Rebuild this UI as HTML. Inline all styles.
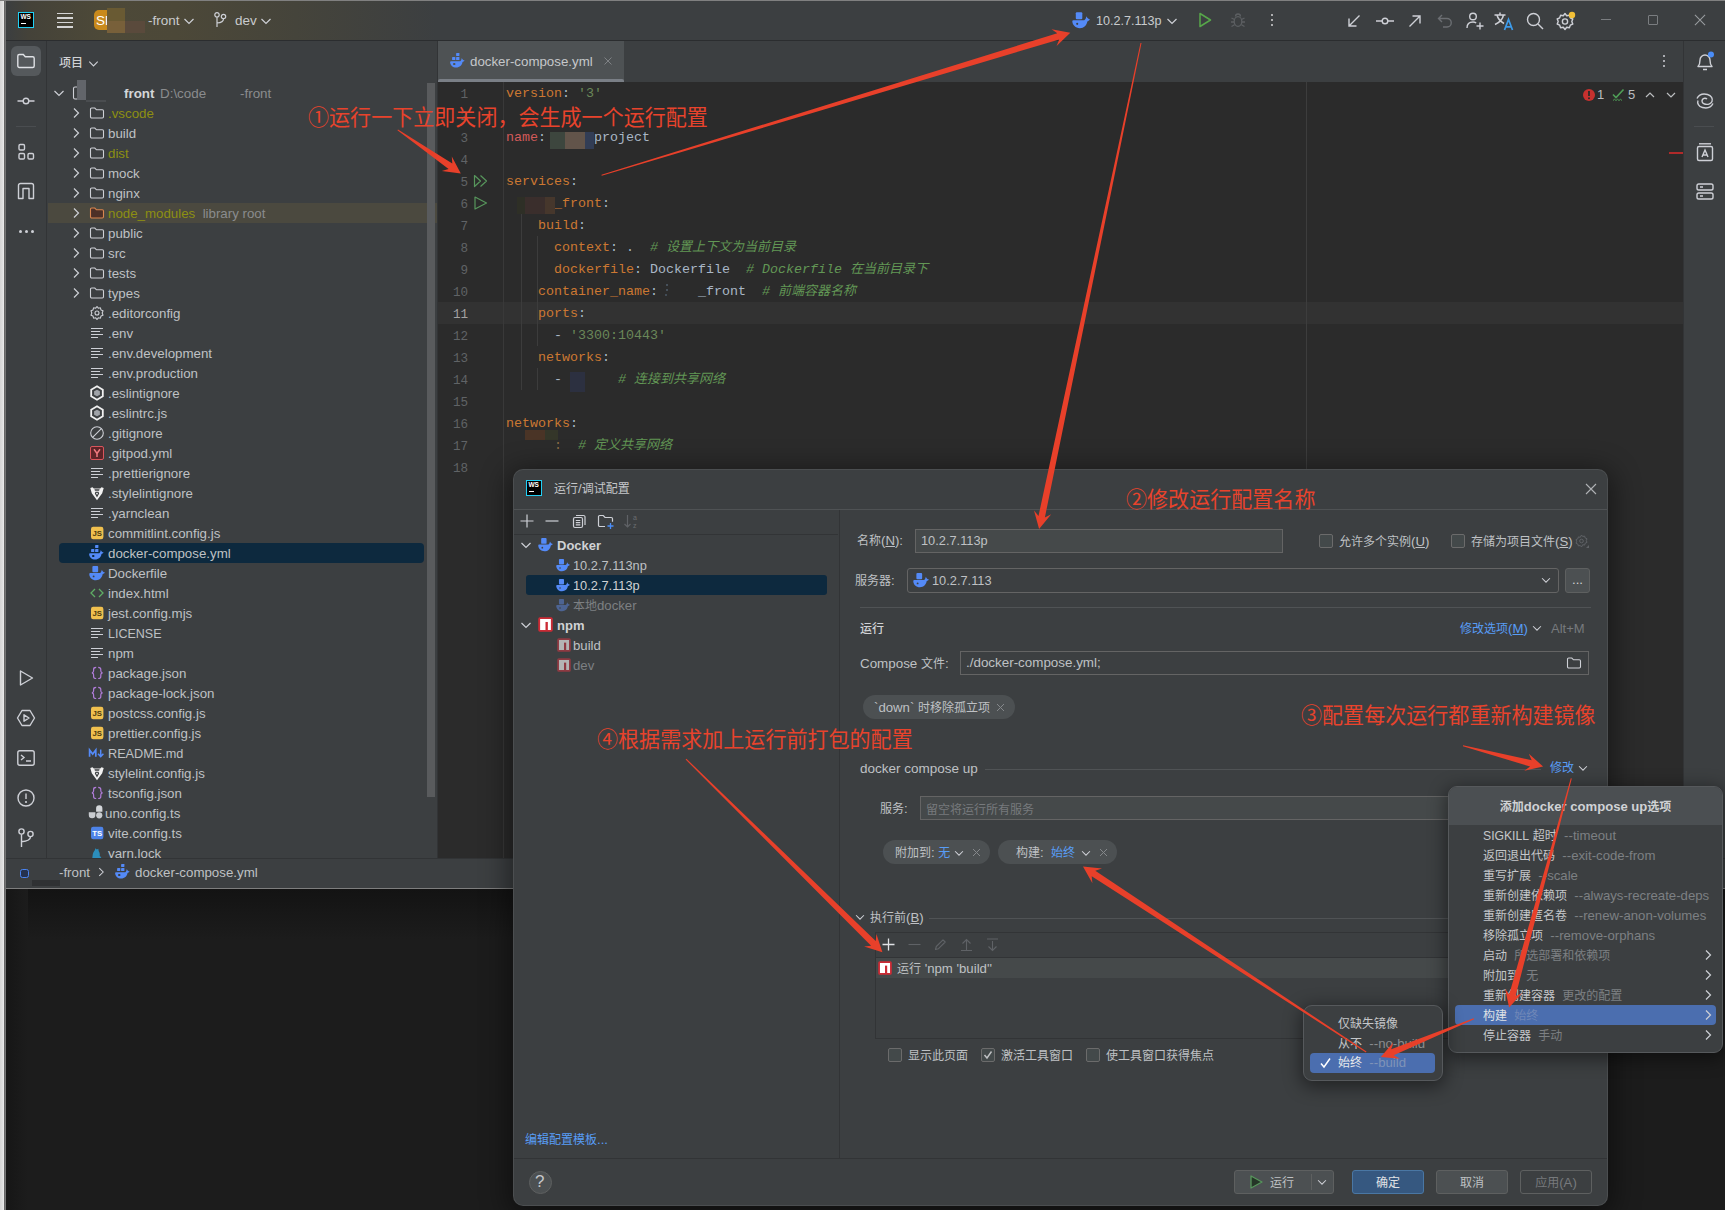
<!DOCTYPE html>
<html lang="zh"><head><meta charset="utf-8"><title>WebStorm</title>
<style>
*{box-sizing:border-box;margin:0;padding:0}
html,body{width:1725px;height:1210px;overflow:hidden;background:#1c1c1c}
body{position:relative;font-family:"Liberation Sans","Noto Sans CJK SC",sans-serif;font-size:13.2px;color:#bfc1c4}
.a{position:absolute}
.i{position:absolute;display:block}
.c{font-size:12px}
.t{position:absolute;white-space:pre;line-height:20px;height:20px}
.g{color:#8a8c8e}
.ol{color:#8d8f12}
.b{font-weight:700}
.bl{color:#589df6}
.code{position:absolute;white-space:pre;font-family:"Liberation Mono","Noto Sans CJK SC",monospace;font-size:13.33px;line-height:22px;height:22px;color:#a9b7c6}
.code .c{font-size:13px}
.k{color:#cc7832}.s{color:#6a8759}.cm{color:#629755;font-style:italic}.nm{color:#d25a5a}
.ln{position:absolute;width:30px;text-align:right;font-family:"Liberation Mono",monospace;font-size:12.6px;line-height:22px;color:#606366}
.red{position:absolute;white-space:pre;color:#e8432c;font-family:"Noto Sans CJK SC","Liberation Sans",sans-serif;line-height:28px}
.inp{position:absolute;background:#45494a;border:1px solid #646464}
.btn{position:absolute;border:1px solid #5e6060;background:#4c5052;border-radius:3px;text-align:center;line-height:24px;height:26px}
.cb{position:absolute;width:14px;height:14px;border:1px solid #6b6b6b;background:#43494a;border-radius:2px}
.chip{position:absolute;background:#4c5052;border-radius:12px;height:24px}
.mos{position:absolute}
</style></head><body>
<div class="a" style="left:0;top:0;width:4px;height:1210px;background:linear-gradient(90deg,#d4d4d4 0,#dedede 60%,#ececec 100%)"></div><div class="a" style="left:4px;top:0;width:2px;height:1210px;background:linear-gradient(90deg,#5e5e5e,#7c7c7c)"></div><div class="a" style="left:6px;top:0;width:1719px;height:889px;background:#3c3f41"></div><div class="a" style="left:6px;top:0;width:1719px;height:40px;background:linear-gradient(90deg,#3b3e40 0,#444239 22px,#4d4938 95px,#4c4838 170px,#45443b 290px,#3c3f41 430px)"></div><div class="a" style="left:0;top:0;width:1725px;height:1px;background:#808080"></div><div class="a" style="left:6px;top:40px;width:1719px;height:1px;background:#2b2d2f"></div><div class="a" style="left:18px;top:12px;width:16px;height:16px;background:#000;border:1.500px solid #21d0f5"></div><div class="a" style="left:20.500px;top:13px;font-size:6.500px;font-weight:700;color:#fff;line-height:8px;letter-spacing:-0.2px">WS</div><div class="a" style="left:21px;top:23px;width:5px;height:1.300px;background:#fff"></div><div class="a" style="left:57px;top:12.5px;width:16px;height:1.800px;background:#d4d4d4"></div><div class="a" style="left:57px;top:17px;width:16px;height:1.800px;background:#d4d4d4"></div><div class="a" style="left:57px;top:21.5px;width:16px;height:1.800px;background:#d4d4d4"></div><div class="a" style="left:57px;top:26px;width:16px;height:1.800px;background:#d4d4d4"></div><div class="a" style="left:94px;top:10px;width:22px;height:20px;border-radius:5px;background:#c98a1c"></div><div class="t" style="left:96px;top:10.500px;color:#fff;font-weight:400;font-size:13.500px">SF</div><div class="mos" style="left:107px;top:8px;width:18px;height:13px;background:#695a33"></div><div class="mos" style="left:107px;top:21px;width:18px;height:12px;background:#78603a"></div><div class="mos" style="left:125px;top:21px;width:20px;height:12px;background:#5a4a3c"></div><div class="t" style="left:148px;top:11px;font-size:13.500px;color:#c9cbcd">-front</div><svg class="i" style="left:181px;top:13px" width="16" height="16" viewBox="0 0 16 16"><path d="M3.5 6L8 10.5 12.5 6" fill="none" stroke="#ced0d6" stroke-width="1.2"/></svg><svg class="i" style="left:212px;top:11px" width="16" height="18" viewBox="0 0 16 18"><circle cx="5" cy="3.800" r="2.200" fill="none" stroke="#ced0d6" stroke-width="1.200"/><circle cx="11.500" cy="5.500" r="2.200" fill="none" stroke="#ced0d6" stroke-width="1.200"/><path d="M5 6v10M11.500 7.700c0 3-2 4-6.500 4.300" fill="none" stroke="#ced0d6" stroke-width="1.200"/></svg><div class="t" style="left:235px;top:11px;font-size:13.500px;color:#c9cbcd">dev</div><svg class="i" style="left:258px;top:13px" width="16" height="16" viewBox="0 0 16 16"><path d="M3.5 6L8 10.5 12.5 6" fill="none" stroke="#ced0d6" stroke-width="1.2"/></svg><svg class="i" style="left:1072px;top:11px" width="18" height="18" viewBox="0 0 16 16"><g transform="translate(0 1) scale(0.8889)"><rect x="3.800" y="0.100" width="6.500" height="7" rx="1.100" fill="#548af7"/><path d="M0.300 9.200Q0.300 8 1.300 8H12.200C13.500 7.500 14 6 14.400 4.200 15.200 6 16.400 7 18 7.400 17 8.500 16 9 15.300 9.300 14.800 13 12 16 7.800 16 3.500 16 0.500 13 0.300 9.200z" fill="#548af7"/><circle cx="5.200" cy="11.700" r="1.050" fill="#3c3f41"/></g></svg><div class="t" style="left:1096px;top:11px;font-size:12.600px;color:#c9cbcd">10.2.7.113p</div><svg class="i" style="left:1164px;top:13px" width="16" height="16" viewBox="0 0 16 16"><path d="M3.5 6L8 10.5 12.5 6" fill="none" stroke="#ced0d6" stroke-width="1.2"/></svg><svg class="i" style="left:1196px;top:11px" width="18" height="18" viewBox="0 0 18 18"><path d="M4 2.500l10.500 6.500L4 15.500z" fill="none" stroke="#57a64a" stroke-width="1.500" stroke-linejoin="round"/></svg><svg class="i" style="left:1229px;top:11px" width="18" height="18" viewBox="0 0 18 18"><ellipse cx="9" cy="10.500" rx="3.800" ry="4.800" fill="none" stroke="#5c5f62" stroke-width="1.300"/><path d="M6.500 5.500a2.500 2.500 0 0 1 5 0M2.500 7l3 1.500M15.500 7l-3 1.500M2 11h3.200M16 11h-3.200M2.500 15.500l3-1.800M15.500 15.500l-3-1.800" fill="none" stroke="#5c5f62" stroke-width="1.300"/></svg><div class="a" style="left:1271px;top:14px;width:2px;height:2px;background:#d4d4d4;border-radius:1px"></div><div class="a" style="left:1271px;top:19px;width:2px;height:2px;background:#d4d4d4;border-radius:1px"></div><div class="a" style="left:1271px;top:24px;width:2px;height:2px;background:#d4d4d4;border-radius:1px"></div><svg class="i" style="left:1345px;top:12px" width="18" height="18" viewBox="0 0 18 18"><path d="M14.500 3.500L4 14M4 6.500V14h7.500" fill="none" stroke="#ced0d6" stroke-width="1.400"/></svg><svg class="i" style="left:1375px;top:12px" width="20" height="18" viewBox="0 0 20 18"><circle cx="10" cy="9" r="2.800" fill="none" stroke="#ced0d6" stroke-width="1.400"/><path d="M1 9h6M13 9h6" fill="none" stroke="#ced0d6" stroke-width="1.400"/></svg><svg class="i" style="left:1406px;top:12px" width="18" height="18" viewBox="0 0 18 18"><path d="M3.500 14.500L14 4M6.500 4H14v7.500" fill="none" stroke="#ced0d6" stroke-width="1.400"/></svg><svg class="i" style="left:1436px;top:12px" width="18" height="18" viewBox="0 0 18 18"><path d="M6 3L2.500 6.500 6 10M2.500 6.500H11a4.200 4.200 0 0 1 0 8.500H7" fill="none" stroke="#6b6e72" stroke-width="1.400"/></svg><svg class="i" style="left:1465px;top:11px" width="20" height="20" viewBox="0 0 20 20"><circle cx="8" cy="5.500" r="3.300" fill="none" stroke="#ced0d6" stroke-width="1.400"/><path d="M2 17c0-4 2.500-6 6-6 1.200 0 2.300.3 3.200.8M15 11.500v7M11.500 15h7" fill="none" stroke="#ced0d6" stroke-width="1.400"/></svg><svg class="i" style="left:1493px;top:10px" width="22" height="22" viewBox="0 0 22 22"><path d="M1.500 5h11M7 2.500V5M10.500 5c-.8 4-4 7.500-8.500 9.500M4 5c.8 3.500 3.500 6.500 7 8.500" fill="none" stroke="#ced0d6" stroke-width="1.500"/><path d="M11.500 20l4-10.500 4 10.500M12.800 16.800h5.400" fill="none" stroke="#3d9be9" stroke-width="1.700"/></svg><svg class="i" style="left:1525px;top:11px" width="20" height="20" viewBox="0 0 20 20"><circle cx="8.500" cy="8.500" r="6" fill="none" stroke="#ced0d6" stroke-width="1.400" stroke-width="1.600"/><path d="M13 13l5 5" fill="none" stroke="#ced0d6" stroke-width="1.400" stroke-width="1.600"/></svg><svg class="i" style="left:1555px;top:10px" width="22" height="22" viewBox="0 0 22 22"><circle cx="10" cy="11.500" r="2.600" fill="none" stroke="#ced0d6" stroke-width="1.400"/><path d="M10 3.500l1.700 2.200 2.700-.5.900 2.600 2.500 1.200-1 2.500 1 2.500-2.500 1.200-.9 2.600-2.700-.5L10 19.500l-1.700-2.200-2.700.5-.9-2.600-2.500-1.200 1-2.500-1-2.500 2.500-1.200.9-2.600 2.700.5z" fill="none" stroke="#ced0d6" stroke-width="1.400" stroke-linejoin="round"/><circle cx="17" cy="5" r="3.200" fill="#f2c037"/></svg><div class="a" style="left:1601px;top:19px;width:10px;height:1px;background:#7a7d80"></div><div class="a" style="left:1648px;top:15px;width:10px;height:10px;border:1px solid #7a7d80;border-radius:1px"></div><svg class="i" style="left:1694px;top:14px" width="12" height="12" viewBox="0 0 13 13"><path d="M1 1l11 11M12 1L1 12" stroke="#9a9da0" stroke-width="1.100"/></svg><div class="a" style="left:46px;top:41px;width:1px;height:817px;background:#323436"></div><div class="a" style="left:11px;top:46px;width:30px;height:30px;border-radius:6px;background:#55595c"></div><svg class="i" style="left:16px;top:51px" width="20" height="20" viewBox="0 0 20 20"><path d="M1.800 5a1.500 1.500 0 0 1 1.500-1.500h4l2 2.300h7.400a1.500 1.500 0 0 1 1.500 1.500v7.700a1.500 1.500 0 0 1-1.500 1.500H3.300a1.500 1.500 0 0 1-1.500-1.500z" fill="none" stroke="#dfe1e5" stroke-width="1.400"/></svg><svg class="i" style="left:16px;top:91px" width="20" height="20" viewBox="0 0 20 20"><circle cx="10" cy="10" r="2.800" fill="none" stroke="#ced0d6" stroke-width="1.400"/><path d="M1.500 10h5.700M12.800 10h5.700" fill="none" stroke="#ced0d6" stroke-width="1.400"/></svg><div class="a" style="left:16px;top:126px;width:20px;height:1px;background:#4a4d50"></div><svg class="i" style="left:16px;top:142px" width="20" height="20" viewBox="0 0 20 20"><rect x="3" y="2.500" width="5.500" height="5.500" rx="1.200" fill="none" stroke="#ced0d6" stroke-width="1.400"/><rect x="3" y="11.500" width="5.500" height="5.500" rx="1.200" fill="none" stroke="#ced0d6" stroke-width="1.400"/><rect x="12" y="11.500" width="5.500" height="5.500" rx="1.200" fill="none" stroke="#ced0d6" stroke-width="1.400"/></svg><svg class="i" style="left:16px;top:181px" width="20" height="20" viewBox="0 0 20 20"><path d="M2.500 17.500V4.500a2 2 0 0 1 2-2h11a2 2 0 0 1 2 2v13h-4.500V7.500h-6v10z" fill="none" stroke="#ced0d6" stroke-width="1.400" stroke-width="1.500" stroke-linejoin="round"/></svg><div class="a" style="left:19px;top:230px;width:3px;height:3px;background:#ced0d6;border-radius:2px"></div><div class="a" style="left:25px;top:230px;width:3px;height:3px;background:#ced0d6;border-radius:2px"></div><div class="a" style="left:31px;top:230px;width:3px;height:3px;background:#ced0d6;border-radius:2px"></div><svg class="i" style="left:16px;top:668px" width="20" height="20" viewBox="0 0 20 20"><path d="M4.500 3l12 7-12 7z" fill="none" stroke="#ced0d6" stroke-width="1.400" stroke-linejoin="round"/></svg><svg class="i" style="left:16px;top:708px" width="20" height="20" viewBox="0 0 20 20"><path d="M6 2.500h8l4.500 7.500-4.500 7.500H6L1.500 10z" fill="none" stroke="#ced0d6" stroke-width="1.400" stroke-linejoin="round"/><path d="M8 6.800l5 3.200-5 3.200z" fill="none" stroke="#ced0d6" stroke-width="1.400" stroke-linejoin="round"/></svg><svg class="i" style="left:16px;top:748px" width="20" height="20" viewBox="0 0 20 20"><rect x="1.800" y="2.800" width="16.400" height="14.400" rx="2" fill="none" stroke="#ced0d6" stroke-width="1.400"/><path d="M5 7l3 2.500L5 12M10 13h5" fill="none" stroke="#ced0d6" stroke-width="1.400"/></svg><svg class="i" style="left:16px;top:788px" width="20" height="20" viewBox="0 0 20 20"><circle cx="10" cy="10" r="8" fill="none" stroke="#ced0d6" stroke-width="1.400"/><path d="M10 5.500v5.500" fill="none" stroke="#ced0d6" stroke-width="1.400" stroke-width="1.800"/><circle cx="10" cy="14" r="1.100" fill="#ced0d6"/></svg><svg class="i" style="left:16px;top:827px" width="20" height="22" viewBox="0 0 20 22"><circle cx="5.500" cy="4.500" r="2.600" fill="none" stroke="#ced0d6" stroke-width="1.400"/><circle cx="14.500" cy="7" r="2.600" fill="none" stroke="#ced0d6" stroke-width="1.400"/><path d="M5.500 7.200V20M14.500 9.700c0 3.500-3 4.500-9 5" fill="none" stroke="#ced0d6" stroke-width="1.400"/></svg><div class="t" style="left:59px;top:53px;color:#d0d2d5"><span class="c" style="font-size:12px;font-weight:500">项目</span></div><svg class="i" style="left:86px;top:56px" width="15" height="15" viewBox="0 0 16 16"><path d="M3.5 6L8 10.5 12.5 6" fill="none" stroke="#ced0d6" stroke-width="1.2"/></svg><div class="a" style="left:48px;top:41px;width:389px;height:817px;overflow:hidden"><svg class="i" style="left:3px;top:44px" width="16" height="16" viewBox="0 0 16 16"><path d="M3.5 6L8 10.5 12.5 6" fill="none" stroke="#ced0d6" stroke-width="1.2"/></svg><svg class="i" style="left:24px;top:44px" width="16" height="16" viewBox="0 0 16 16"><rect x="1.500" y="2" width="13" height="12" rx="1.500" fill="none" stroke="#ced0d6" stroke-width="1.100"/></svg><div class="mos" style="left:29px;top:39px;width:9px;height:20px;background:#62656a"></div><div class="mos" style="left:38px;top:43px;width:34px;height:16px;background:#3c3f41"></div><div class="mos" style="left:38px;top:59px;width:20px;height:2px;background:#4a4d50"></div><div class="t b" style="left:76px;top:43px;color:#d4d6d8;font-size:13.400px">front</div><div class="t g" style="left:112px;top:43px;font-size:13.400px">D:\code</div><div class="t g" style="left:192px;top:43px;font-size:13.400px">-front</div><svg class="i" style="left:20px;top:64px" width="16" height="16" viewBox="0 0 16 16"><path d="M6 3.5l4.5 4.5L6 12.5" fill="none" stroke="#ced0d6" stroke-width="1.2"/></svg><svg class="i" style="left:41px;top:64px" width="16" height="16" viewBox="0 0 16 16"><path d="M1.5 4.2a1.2 1.2 0 0 1 1.2-1.2h3.1l1.7 1.8h5.8a1.2 1.2 0 0 1 1.2 1.2v5.8a1.2 1.2 0 0 1-1.2 1.2H2.7a1.2 1.2 0 0 1-1.2-1.2z" fill="none" stroke="#ced0d6" stroke-width="1.1"/></svg><div class="t ol" style="left:60px;top:63px;font-size:13.3px">.vscode</div><svg class="i" style="left:20px;top:84px" width="16" height="16" viewBox="0 0 16 16"><path d="M6 3.5l4.5 4.5L6 12.5" fill="none" stroke="#ced0d6" stroke-width="1.2"/></svg><svg class="i" style="left:41px;top:84px" width="16" height="16" viewBox="0 0 16 16"><path d="M1.5 4.2a1.2 1.2 0 0 1 1.2-1.2h3.1l1.7 1.8h5.8a1.2 1.2 0 0 1 1.2 1.2v5.8a1.2 1.2 0 0 1-1.2 1.2H2.7a1.2 1.2 0 0 1-1.2-1.2z" fill="none" stroke="#ced0d6" stroke-width="1.1"/></svg><div class="t " style="left:60px;top:83px;font-size:13.3px">build</div><svg class="i" style="left:20px;top:104px" width="16" height="16" viewBox="0 0 16 16"><path d="M6 3.5l4.5 4.5L6 12.5" fill="none" stroke="#ced0d6" stroke-width="1.2"/></svg><svg class="i" style="left:41px;top:104px" width="16" height="16" viewBox="0 0 16 16"><path d="M1.5 4.2a1.2 1.2 0 0 1 1.2-1.2h3.1l1.7 1.8h5.8a1.2 1.2 0 0 1 1.2 1.2v5.8a1.2 1.2 0 0 1-1.2 1.2H2.7a1.2 1.2 0 0 1-1.2-1.2z" fill="none" stroke="#ced0d6" stroke-width="1.1"/></svg><div class="t ol" style="left:60px;top:103px;font-size:13.3px">dist</div><svg class="i" style="left:20px;top:124px" width="16" height="16" viewBox="0 0 16 16"><path d="M6 3.5l4.5 4.5L6 12.5" fill="none" stroke="#ced0d6" stroke-width="1.2"/></svg><svg class="i" style="left:41px;top:124px" width="16" height="16" viewBox="0 0 16 16"><path d="M1.5 4.2a1.2 1.2 0 0 1 1.2-1.2h3.1l1.7 1.8h5.8a1.2 1.2 0 0 1 1.2 1.2v5.8a1.2 1.2 0 0 1-1.2 1.2H2.7a1.2 1.2 0 0 1-1.2-1.2z" fill="none" stroke="#ced0d6" stroke-width="1.1"/></svg><div class="t " style="left:60px;top:123px;font-size:13.3px">mock</div><svg class="i" style="left:20px;top:144px" width="16" height="16" viewBox="0 0 16 16"><path d="M6 3.5l4.5 4.5L6 12.5" fill="none" stroke="#ced0d6" stroke-width="1.2"/></svg><svg class="i" style="left:41px;top:144px" width="16" height="16" viewBox="0 0 16 16"><path d="M1.5 4.2a1.2 1.2 0 0 1 1.2-1.2h3.1l1.7 1.8h5.8a1.2 1.2 0 0 1 1.2 1.2v5.8a1.2 1.2 0 0 1-1.2 1.2H2.7a1.2 1.2 0 0 1-1.2-1.2z" fill="none" stroke="#ced0d6" stroke-width="1.1"/></svg><div class="t " style="left:60px;top:143px;font-size:13.3px">nginx</div><div class="a" style="left:0;top:162px;width:389px;height:20px;background:#4b493f"></div><svg class="i" style="left:20px;top:164px" width="16" height="16" viewBox="0 0 16 16"><path d="M6 3.5l4.5 4.5L6 12.5" fill="none" stroke="#ced0d6" stroke-width="1.2"/></svg><svg class="i" style="left:41px;top:164px" width="16" height="16" viewBox="0 0 16 16"><path d="M1.5 4.2a1.2 1.2 0 0 1 1.2-1.2h3.1l1.7 1.8h5.8a1.2 1.2 0 0 1 1.2 1.2v5.8a1.2 1.2 0 0 1-1.2 1.2H2.7a1.2 1.2 0 0 1-1.2-1.2z" fill="#4d3027" stroke="#d98650" stroke-width="1.1"/></svg><div class="t ol" style="left:60px;top:163px;font-size:13.3px">node_modules<span class="g">  library root</span></div><svg class="i" style="left:20px;top:184px" width="16" height="16" viewBox="0 0 16 16"><path d="M6 3.5l4.5 4.5L6 12.5" fill="none" stroke="#ced0d6" stroke-width="1.2"/></svg><svg class="i" style="left:41px;top:184px" width="16" height="16" viewBox="0 0 16 16"><path d="M1.5 4.2a1.2 1.2 0 0 1 1.2-1.2h3.1l1.7 1.8h5.8a1.2 1.2 0 0 1 1.2 1.2v5.8a1.2 1.2 0 0 1-1.2 1.2H2.7a1.2 1.2 0 0 1-1.2-1.2z" fill="none" stroke="#ced0d6" stroke-width="1.1"/></svg><div class="t " style="left:60px;top:183px;font-size:13.3px">public</div><svg class="i" style="left:20px;top:204px" width="16" height="16" viewBox="0 0 16 16"><path d="M6 3.5l4.5 4.5L6 12.5" fill="none" stroke="#ced0d6" stroke-width="1.2"/></svg><svg class="i" style="left:41px;top:204px" width="16" height="16" viewBox="0 0 16 16"><path d="M1.5 4.2a1.2 1.2 0 0 1 1.2-1.2h3.1l1.7 1.8h5.8a1.2 1.2 0 0 1 1.2 1.2v5.8a1.2 1.2 0 0 1-1.2 1.2H2.7a1.2 1.2 0 0 1-1.2-1.2z" fill="none" stroke="#ced0d6" stroke-width="1.1"/></svg><div class="t " style="left:60px;top:203px;font-size:13.3px">src</div><svg class="i" style="left:20px;top:224px" width="16" height="16" viewBox="0 0 16 16"><path d="M6 3.5l4.5 4.5L6 12.5" fill="none" stroke="#ced0d6" stroke-width="1.2"/></svg><svg class="i" style="left:41px;top:224px" width="16" height="16" viewBox="0 0 16 16"><path d="M1.5 4.2a1.2 1.2 0 0 1 1.2-1.2h3.1l1.7 1.8h5.8a1.2 1.2 0 0 1 1.2 1.2v5.8a1.2 1.2 0 0 1-1.2 1.2H2.7a1.2 1.2 0 0 1-1.2-1.2z" fill="none" stroke="#ced0d6" stroke-width="1.1"/></svg><div class="t " style="left:60px;top:223px;font-size:13.3px">tests</div><svg class="i" style="left:20px;top:244px" width="16" height="16" viewBox="0 0 16 16"><path d="M6 3.5l4.5 4.5L6 12.5" fill="none" stroke="#ced0d6" stroke-width="1.2"/></svg><svg class="i" style="left:41px;top:244px" width="16" height="16" viewBox="0 0 16 16"><path d="M1.5 4.2a1.2 1.2 0 0 1 1.2-1.2h3.1l1.7 1.8h5.8a1.2 1.2 0 0 1 1.2 1.2v5.8a1.2 1.2 0 0 1-1.2 1.2H2.7a1.2 1.2 0 0 1-1.2-1.2z" fill="none" stroke="#ced0d6" stroke-width="1.1"/></svg><div class="t " style="left:60px;top:243px;font-size:13.3px">types</div><svg class="i" style="left:41px;top:264px" width="16" height="16" viewBox="0 0 16 16"><circle cx="8" cy="8" r="2" fill="none" stroke="#ced0d6" stroke-width="1.1"/><path d="M8 1.5l1.300 1.700 2.100-.4.600 2.100 2 .8-.800 2.300.8 2.300-2 .8-.6 2.100-2.100-.4L8 14.500l-1.300-1.700-2.100.4-.6-2.100-2-.8.800-2.300L2 5.700l2-.8.600-2.100 2.100.4z" fill="none" stroke="#ced0d6" stroke-width="1.1" stroke-linejoin="round"/></svg><div class="t " style="left:60px;top:263px;font-size:13.3px">.editorconfig</div><svg class="i" style="left:41px;top:284px" width="16" height="16" viewBox="0 0 16 16"><path d="M2 3.5h12M2 6.5h9M2 9.5h12M2 12.5h7" stroke="#ced0d6" stroke-width="1.1"/></svg><div class="t " style="left:60px;top:283px;font-size:13.3px">.env</div><svg class="i" style="left:41px;top:304px" width="16" height="16" viewBox="0 0 16 16"><path d="M2 3.5h12M2 6.5h9M2 9.5h12M2 12.5h7" stroke="#ced0d6" stroke-width="1.1"/></svg><div class="t " style="left:60px;top:303px;font-size:13.3px">.env.development</div><svg class="i" style="left:41px;top:324px" width="16" height="16" viewBox="0 0 16 16"><path d="M2 3.5h12M2 6.5h9M2 9.5h12M2 12.5h7" stroke="#ced0d6" stroke-width="1.1"/></svg><div class="t " style="left:60px;top:323px;font-size:13.3px">.env.production</div><svg class="i" style="left:41px;top:344px" width="16" height="16" viewBox="0 0 16 16"><path d="M8 1.300l5.800 3.350v6.700L8 14.700l-5.800-3.350v-6.700z" fill="none" stroke="#f0f0f0" stroke-width="1.800"/><path d="M8 4.700l2.900 1.650v3.300L8 11.300 5.100 9.650v-3.300z" fill="#a0a3a8"/></svg><div class="t " style="left:60px;top:343px;font-size:13.3px">.eslintignore</div><svg class="i" style="left:41px;top:364px" width="16" height="16" viewBox="0 0 16 16"><path d="M8 1.300l5.800 3.350v6.700L8 14.700l-5.800-3.350v-6.700z" fill="none" stroke="#f0f0f0" stroke-width="1.800"/><path d="M8 4.700l2.900 1.650v3.300L8 11.300 5.100 9.650v-3.300z" fill="#a0a3a8"/></svg><div class="t " style="left:60px;top:363px;font-size:13.3px">.eslintrc.js</div><svg class="i" style="left:41px;top:384px" width="16" height="16" viewBox="0 0 16 16"><circle cx="8" cy="8" r="6.300" fill="none" stroke="#ced0d6" stroke-width="1.1"/><path d="M3.600 12.400l8.800-8.800" stroke="#ced0d6" stroke-width="1.1"/></svg><div class="t " style="left:60px;top:383px;font-size:13.3px">.gitignore</div><svg class="i" style="left:41px;top:404px" width="16" height="16" viewBox="0 0 16 16"><rect x="1.500" y="1.500" width="13" height="13" rx="1.500" fill="#5b2428" stroke="#d9555c" stroke-width="1"/><path d="M5 4.300l3 4.200 3-4.200M8 8.500v3.500" fill="none" stroke="#f07a80" stroke-width="1.500"/></svg><div class="t " style="left:60px;top:403px;font-size:13.3px">.gitpod.yml</div><svg class="i" style="left:41px;top:424px" width="16" height="16" viewBox="0 0 16 16"><path d="M2 3.5h12M2 6.5h9M2 9.5h12M2 12.5h7" stroke="#ced0d6" stroke-width="1.1"/></svg><div class="t " style="left:60px;top:423px;font-size:13.3px">.prettierignore</div><svg class="i" style="left:41px;top:444px" width="16" height="16" viewBox="0 0 16 16"><path d="M1.300 3l2.200-.7 1.300 1.200h6.400l1.300-1.200 2.200.7-1.500 5.200L8 15.300 2.800 8.200z" fill="#f2f2f2"/><path d="M5.400 4.200h5.200l-.5 1.500H5.900zM6.500 6.800h3l.7 1.700L8 12.600 5.800 8.500z" fill="#3c3f41"/><circle cx="8" cy="8.600" r=".9" fill="#f2f2f2"/></svg><div class="t " style="left:60px;top:443px;font-size:13.3px">.stylelintignore</div><svg class="i" style="left:41px;top:464px" width="16" height="16" viewBox="0 0 16 16"><path d="M2 3.5h12M2 6.5h9M2 9.5h12M2 12.5h7" stroke="#ced0d6" stroke-width="1.1"/></svg><div class="t " style="left:60px;top:463px;font-size:13.3px">.yarnclean</div><svg class="i" style="left:41px;top:484px" width="16" height="16" viewBox="0 0 16 16"><rect x="2" y="1.800" width="12.400" height="12.400" rx="2.200" fill="#f0c04e"/><text x="8.200" y="10.800" font-family="Liberation Sans, sans-serif" font-weight="700" font-size="7.800" text-anchor="middle" fill="#4a3a10">JS</text></svg><div class="t " style="left:60px;top:483px;font-size:13.3px">commitlint.config.js</div><div class="a" style="left:11px;top:502px;width:365px;height:20px;border-radius:4px;background:#0d293e"></div><svg class="i" style="left:41px;top:504px" width="15" height="15" viewBox="0 0 16 16"><g transform="scale(1.0667)"><rect x="6.100" y="0.100" width="3.300" height="2.900" rx="0.400" fill="#548af7"/><rect x="2.100" y="4.100" width="3.200" height="3" rx="0.400" fill="#548af7"/><rect x="6.100" y="4.100" width="3.300" height="3" rx="0.400" fill="#548af7"/><path d="M0.100 9.200Q0.100 8.200 1 8.200H10.200C11.100 7.700 11.500 6.500 11.800 5 12.400 6.400 13.300 7.200 14.700 7.500 13.900 8.300 13.100 8.800 12.500 9 12 12.200 9.600 14.500 6.200 14.500 2.700 14.500 0.300 12.200 0.100 9.200z" fill="#548af7"/><rect x="3.200" y="10" width="2.100" height="2" rx="0.300" fill="#0d293e"/></g></svg><div class="t " style="left:60px;top:503px;font-size:13.3px">docker-compose.yml</div><svg class="i" style="left:41px;top:524px" width="16" height="16" viewBox="0 0 16 16"><g transform="translate(0 1) scale(0.8889)"><rect x="3.800" y="0.100" width="6.500" height="7" rx="1.100" fill="#548af7"/><path d="M0.300 9.200Q0.300 8 1.300 8H12.200C13.500 7.500 14 6 14.400 4.200 15.200 6 16.400 7 18 7.400 17 8.500 16 9 15.300 9.300 14.800 13 12 16 7.800 16 3.500 16 0.500 13 0.300 9.200z" fill="#548af7"/><circle cx="5.200" cy="11.700" r="1.050" fill="#3c3f41"/></g></svg><div class="t " style="left:60px;top:523px;font-size:13.3px">Dockerfile</div><svg class="i" style="left:41px;top:544px" width="16" height="16" viewBox="0 0 16 16"><path d="M6 4L2 8l4 4M10 4l4 4-4 4" fill="none" stroke="#5fad65" stroke-width="1.3"/></svg><div class="t " style="left:60px;top:543px;font-size:13.3px">index.html</div><svg class="i" style="left:41px;top:564px" width="16" height="16" viewBox="0 0 16 16"><rect x="2" y="1.800" width="12.400" height="12.400" rx="2.200" fill="#f0c04e"/><text x="8.200" y="10.800" font-family="Liberation Sans, sans-serif" font-weight="700" font-size="7.800" text-anchor="middle" fill="#4a3a10">JS</text></svg><div class="t " style="left:60px;top:563px;font-size:13.3px">jest.config.mjs</div><svg class="i" style="left:41px;top:584px" width="16" height="16" viewBox="0 0 16 16"><path d="M2 3.5h12M2 6.5h9M2 9.5h12M2 12.5h7" stroke="#ced0d6" stroke-width="1.1"/></svg><div class="t " style="left:60px;top:583px;font-size:12.5px">LICENSE</div><svg class="i" style="left:41px;top:604px" width="16" height="16" viewBox="0 0 16 16"><path d="M2 3.5h12M2 6.5h9M2 9.5h12M2 12.5h7" stroke="#ced0d6" stroke-width="1.1"/></svg><div class="t " style="left:60px;top:603px;font-size:13.3px">npm</div><svg class="i" style="left:41px;top:624px" width="16" height="16" viewBox="0 0 16 16"><path d="M7.200 2.300c-2 0-2.600.7-2.600 2.100v1.700c0 1-.5 1.600-1.700 1.800 1.200.2 1.700.8 1.700 1.800v1.700c0 1.400.6 2.100 2.600 2.100M9.200 2.300c2 0 2.600.7 2.600 2.100v1.700c0 1 .5 1.600 1.700 1.800-1.200.2-1.700.8-1.700 1.800v1.700c0 1.400-.6 2.100-2.600 2.100" fill="none" stroke="#b07cd8" stroke-width="1.200"/></svg><div class="t " style="left:60px;top:623px;font-size:13.3px">package.json</div><svg class="i" style="left:41px;top:644px" width="16" height="16" viewBox="0 0 16 16"><path d="M7.200 2.300c-2 0-2.600.7-2.600 2.100v1.700c0 1-.5 1.600-1.700 1.800 1.200.2 1.700.8 1.700 1.800v1.700c0 1.400.6 2.100 2.600 2.100M9.200 2.300c2 0 2.600.7 2.600 2.100v1.700c0 1 .5 1.600 1.700 1.800-1.200.2-1.700.8-1.700 1.800v1.700c0 1.400-.6 2.100-2.600 2.100" fill="none" stroke="#b07cd8" stroke-width="1.200"/></svg><div class="t " style="left:60px;top:643px;font-size:13.3px">package-lock.json</div><svg class="i" style="left:41px;top:664px" width="16" height="16" viewBox="0 0 16 16"><rect x="2" y="1.800" width="12.400" height="12.400" rx="2.200" fill="#f0c04e"/><text x="8.200" y="10.800" font-family="Liberation Sans, sans-serif" font-weight="700" font-size="7.800" text-anchor="middle" fill="#4a3a10">JS</text></svg><div class="t " style="left:60px;top:663px;font-size:13.3px">postcss.config.js</div><svg class="i" style="left:41px;top:684px" width="16" height="16" viewBox="0 0 16 16"><rect x="2" y="1.800" width="12.400" height="12.400" rx="2.200" fill="#f0c04e"/><text x="8.200" y="10.800" font-family="Liberation Sans, sans-serif" font-weight="700" font-size="7.800" text-anchor="middle" fill="#4a3a10">JS</text></svg><div class="t " style="left:60px;top:683px;font-size:13.3px">prettier.config.js</div><svg class="i" style="left:40px;top:704px" width="16" height="16" viewBox="0 0 16 16"><path d="M1.600 11.800V5l3.100 4 3.100-4v6.800" fill="none" stroke="#548af7" stroke-width="1.700" stroke-linejoin="miter"/><path d="M12.700 4.600v6.600M10 8.800l2.700 2.800 2.700-2.800" fill="none" stroke="#548af7" stroke-width="1.500"/></svg><div class="t " style="left:60px;top:703px;font-size:12.7px">README.md</div><svg class="i" style="left:41px;top:724px" width="16" height="16" viewBox="0 0 16 16"><path d="M1.300 3l2.200-.7 1.300 1.200h6.400l1.300-1.200 2.200.7-1.500 5.200L8 15.300 2.800 8.200z" fill="#f2f2f2"/><path d="M5.400 4.200h5.200l-.5 1.500H5.900zM6.500 6.800h3l.7 1.700L8 12.600 5.800 8.500z" fill="#3c3f41"/><circle cx="8" cy="8.600" r=".9" fill="#f2f2f2"/></svg><div class="t " style="left:60px;top:723px;font-size:13.3px">stylelint.config.js</div><svg class="i" style="left:41px;top:744px" width="16" height="16" viewBox="0 0 16 16"><path d="M7.200 2.300c-2 0-2.600.7-2.600 2.100v1.700c0 1-.5 1.600-1.700 1.800 1.200.2 1.700.8 1.700 1.800v1.700c0 1.400.6 2.100 2.600 2.100M9.200 2.300c2 0 2.600.7 2.600 2.100v1.700c0 1 .5 1.600 1.700 1.800-1.200.2-1.700.8-1.700 1.800v1.700c0 1.400-.6 2.100-2.600 2.100" fill="none" stroke="#b07cd8" stroke-width="1.200"/></svg><div class="t " style="left:60px;top:743px;font-size:13.3px">tsconfig.json</div><svg class="i" style="left:40px;top:764px" width="16" height="16" viewBox="0 0 16 16"><path d="M0.800 7.300h6.600v2.700a3.300 3.300 0 0 1-6.600 0z" fill="#c9ccd0"/><circle cx="11.250" cy="10.300" r="3.100" fill="#c9ccd0"/><path d="M8.100 6.700V3.300a3.150 3.150 0 0 1 6.300 0v3.400z" fill="#d4d7da"/></svg><div class="t " style="left:57px;top:763px;font-size:13.3px">uno.config.ts</div><svg class="i" style="left:41px;top:784px" width="16" height="16" viewBox="0 0 16 16"><rect x="2" y="1.800" width="12.400" height="12.400" rx="2.200" fill="#4d83e8"/><text x="8.200" y="10.800" font-family="Liberation Sans, sans-serif" font-weight="700" font-size="7.800" text-anchor="middle" fill="#ffffff">TS</text></svg><div class="t " style="left:60px;top:783px;font-size:13.3px">vite.config.ts</div><svg class="i" style="left:41px;top:804px" width="16" height="16" viewBox="0 0 16 16"><path d="M1.500 16c1.300-.8 1.800-2 2-4.500.2-2.800 1-5 2.300-6.300l.6-2 1.400 1.300 1.500-.8.400 2.200c1 1.300 1.300 3 1 5 .9.500 1.500 1.400 1.800 2.600.9.300 1.800.400 2.500 1-.7.900-2 1.500-4 1.500z" fill="#2c8ebb"/></svg><div class="t " style="left:60px;top:803px;font-size:13.3px">yarn.lock</div><div class="a" style="left:379px;top:42px;width:8px;height:714px;background:#595b5d"></div></div><div class="a" style="left:437px;top:41px;width:1246px;height:40px;background:#3c3f41"></div><div class="a" style="left:437px;top:41px;width:1px;height:817px;background:#323436"></div><div class="a" style="left:438px;top:41px;width:186px;height:40px;background:#4e5254"></div><div class="a" style="left:438px;top:79px;width:186px;height:3px;background:#7a7f86;border-radius:2px 2px 0 0"></div><svg class="i" style="left:450px;top:53px" width="15" height="15" viewBox="0 0 16 16"><g transform="scale(1.0667)"><rect x="6.100" y="0.100" width="3.300" height="2.900" rx="0.400" fill="#548af7"/><rect x="2.100" y="4.100" width="3.200" height="3" rx="0.400" fill="#548af7"/><rect x="6.100" y="4.100" width="3.300" height="3" rx="0.400" fill="#548af7"/><path d="M0.100 9.200Q0.100 8.200 1 8.200H10.200C11.100 7.700 11.500 6.500 11.800 5 12.400 6.400 13.300 7.200 14.700 7.500 13.900 8.300 13.100 8.800 12.500 9 12 12.200 9.600 14.500 6.200 14.500 2.700 14.500 0.300 12.200 0.100 9.200z" fill="#548af7"/><rect x="3.200" y="10" width="2.100" height="2" rx="0.300" fill="#4e5254"/></g></svg><div class="t" style="left:470px;top:52px;font-size:13.300px;color:#c5c7ca">docker-compose.yml</div><svg class="i" style="left:603px;top:56px" width="10" height="10" viewBox="0 0 10 10"><path d="M1.500 1.500l7 7M8.500 1.500l-7 7" stroke="#7f8285" stroke-width="1"/></svg><div class="a" style="left:1663px;top:55px;width:2px;height:2px;background:#ced0d6;border-radius:1px"></div><div class="a" style="left:1663px;top:60px;width:2px;height:2px;background:#ced0d6;border-radius:1px"></div><div class="a" style="left:1663px;top:65px;width:2px;height:2px;background:#ced0d6;border-radius:1px"></div><div class="a" style="left:438px;top:82px;width:1245px;height:776px;background:#2b2b2b"></div><div class="a" style="left:438px;top:302px;width:1245px;height:22px;background:#323232"></div><div class="a" style="left:503px;top:82px;width:1px;height:776px;background:#393939"></div><div class="a" style="left:1306px;top:82px;width:1px;height:776px;background:#3d3d3d"></div><div class="a" style="left:521px;top:214px;width:1px;height:176px;background:#3c3c3c"></div><div class="a" style="left:537px;top:236px;width:1px;height:110px;background:#3c3c3c"></div><div class="a" style="left:537px;top:368px;width:1px;height:22px;background:#3c3c3c"></div><div class="ln" style="left:438px;top:83.5px;color:#606366">1</div><div class="code" style="left:506px;top:83px"><span class="k">version</span>: <span class="s">'3'</span></div><div class="ln" style="left:438px;top:105.5px;color:#606366">2</div><div class="ln" style="left:438px;top:127.5px;color:#606366">3</div><div class="code" style="left:506px;top:127px"><span class="nm">name</span>:      project</div><div class="ln" style="left:438px;top:149.5px;color:#606366">4</div><div class="ln" style="left:438px;top:171.5px;color:#606366">5</div><div class="code" style="left:506px;top:171px"><span class="k">services</span>:</div><div class="ln" style="left:438px;top:193.5px;color:#606366">6</div><div class="code" style="left:506px;top:193px">      <span class="k">_front</span>:</div><div class="ln" style="left:438px;top:215.5px;color:#606366">7</div><div class="code" style="left:506px;top:215px">    <span class="k">build</span>:</div><div class="ln" style="left:438px;top:237.5px;color:#606366">8</div><div class="code" style="left:506px;top:237px">      <span class="k">context</span>: .  <span class="cm"># <span class="c">设置上下文为当前目录</span></span></div><div class="ln" style="left:438px;top:259.5px;color:#606366">9</div><div class="code" style="left:506px;top:259px">      <span class="k">dockerfile</span>: Dockerfile  <span class="cm"># Dockerfile <span class="c">在当前目录下</span></span></div><div class="ln" style="left:438px;top:281.5px;color:#606366">10</div><div class="code" style="left:506px;top:281px">    <span class="k">container_name</span>:     _front  <span class="cm"># <span class="c">前端容器名称</span></span></div><div class="ln" style="left:438px;top:303.5px;color:#a4a3a3">11</div><div class="code" style="left:506px;top:303px">    <span class="k">ports</span>:</div><div class="ln" style="left:438px;top:325.5px;color:#606366">12</div><div class="code" style="left:506px;top:325px">      - <span class="s">'3300:10443'</span></div><div class="ln" style="left:438px;top:347.5px;color:#606366">13</div><div class="code" style="left:506px;top:347px">    <span class="k">networks</span>:</div><div class="ln" style="left:438px;top:369.5px;color:#606366">14</div><div class="code" style="left:506px;top:369px">      -       <span class="cm"># <span class="c">连接到共享网络</span></span></div><div class="ln" style="left:438px;top:391.5px;color:#606366">15</div><div class="ln" style="left:438px;top:413.5px;color:#606366">16</div><div class="code" style="left:506px;top:413px"><span class="k">networks</span>:</div><div class="ln" style="left:438px;top:435.5px;color:#606366">17</div><div class="code" style="left:506px;top:435px">      <span style="color:#8a6a45">:</span>  <span class="cm"># <span class="c">定义共享网络</span></span></div><div class="ln" style="left:438px;top:457.5px;color:#606366">18</div><div class="mos" style="left:550px;top:132px;width:15px;height:17px;background:#3d463e"></div><div class="mos" style="left:565px;top:132px;width:20px;height:17px;background:#62544a"></div><div class="mos" style="left:585px;top:132px;width:9px;height:17px;background:#323d55"></div><div class="mos" style="left:517px;top:197px;width:8px;height:17px;background:#2e2f26"></div><div class="mos" style="left:525px;top:197px;width:20px;height:17px;background:#3a2e2c"></div><div class="mos" style="left:545px;top:197px;width:10px;height:17px;background:#46372c"></div><div class="mos" style="left:570px;top:372px;width:15px;height:20px;background:#2c3040"></div><div class="mos" style="left:525px;top:430px;width:20px;height:10px;background:#4a3426"></div><div class="mos" style="left:545px;top:430px;width:13px;height:10px;background:#343629"></div><div class="a" style="left:666px;top:284px;width:1.500px;height:2px;background:#46505a"></div><div class="a" style="left:666px;top:289px;width:1.500px;height:2px;background:#46505a"></div><div class="a" style="left:665px;top:294px;width:1.500px;height:2px;background:#414b55"></div><svg class="i" style="left:473px;top:173px" width="16" height="16" viewBox="0 0 16 16"><path d="M1.500 2.500l6 5.500-6 5.500zM7.500 2.500l6 5.500-6 5.500" fill="none" stroke="#57965c" stroke-width="1.200" stroke-linejoin="round"/></svg><svg class="i" style="left:473px;top:195px" width="16" height="16" viewBox="0 0 16 16"><path d="M2 2l11.500 6L2 14z" fill="none" stroke="#57965c" stroke-width="1.200" stroke-linejoin="round"/></svg><svg class="i" style="left:1582px;top:88px" width="14" height="14" viewBox="0 0 14 14"><circle cx="7" cy="7" r="6" fill="#c7312f"/><path d="M7 3v5" stroke="#2b2b2b" stroke-width="1.800"/><circle cx="7" cy="10.300" r="1" fill="#2b2b2b"/></svg><div class="t" style="left:1597px;top:85px;font-size:13px;color:#bcbec0">1</div><svg class="i" style="left:1611px;top:87px" width="15" height="16" viewBox="0 0 15 16"><path d="M2 7.500l3 3 7.500-8" fill="none" stroke="#4f9e57" stroke-width="1.600"/><path d="M2 13.500l1.500-1.200 1.500 1.200 1.500-1.200 1.500 1.200 1.500-1.200 1.500 1.200" fill="none" stroke="#4f9e57" stroke-width="1"/></svg><div class="t" style="left:1628px;top:85px;font-size:13px;color:#bcbec0">5</div><svg class="i" style="left:1644px;top:89px" width="12" height="12" viewBox="0 0 12 12"><path d="M2 8l4-4 4 4" fill="none" stroke="#bcbec0" stroke-width="1.200"/></svg><svg class="i" style="left:1665px;top:89px" width="12" height="12" viewBox="0 0 12 12"><path d="M2 4l4 4 4-4" fill="none" stroke="#bcbec0" stroke-width="1.200"/></svg><div class="a" style="left:1669px;top:152px;width:14px;height:2px;background:#b02a2a"></div><div class="a" style="left:1683px;top:41px;width:42px;height:848px;background:#3c3f41"></div><div class="a" style="left:1683px;top:41px;width:1px;height:848px;background:#323436"></div><svg class="i" style="left:1694px;top:50px" width="22" height="22" viewBox="0 0 22 22"><path d="M4 16.500c1.500-1.500 2-3 2-6.500a5 5 0 0 1 10 0c0 3.500.5 5 2 6.500zM9 19.500h4" fill="none" stroke="#ced0d6" stroke-width="1.400" stroke-linejoin="round"/><circle cx="17" cy="4.500" r="3" fill="#4a8df8"/></svg><svg class="i" style="left:1694px;top:90px" width="22" height="22" viewBox="0 0 22 22"><path d="M3 8.500C5 4.500 9.500 3.500 13.500 4.500c4 1 5.500 4.500 4.500 7-1 2.500-4.500 3.500-7.500 2.500-2.500-.8-3-3-2-4.500 1-1.500 3.500-1.500 4.500-.5M19 13.500c-2 4-6.500 5-10.500 4-4-1-5.500-4.500-4.500-7" fill="none" stroke="#ced0d6" stroke-width="1.400"/></svg><div class="a" style="left:1694px;top:126px;width:20px;height:1px;background:#4a4d50"></div><svg class="i" style="left:1694px;top:141px" width="22" height="22" viewBox="0 0 22 22"><rect x="3.500" y="5.500" width="15" height="14" rx="1.500" fill="none" stroke="#ced0d6" stroke-width="1.400"/><path d="M5 2.800h12" fill="none" stroke="#ced0d6" stroke-width="1.400"/><path d="M8 16l3-7 3 7M9 14h4" fill="none" stroke="#ced0d6" stroke-width="1.400" stroke-width="1.100"/></svg><svg class="i" style="left:1694px;top:180px" width="22" height="22" viewBox="0 0 22 22"><rect x="3" y="4" width="16" height="6" rx="1.800" fill="none" stroke="#ced0d6" stroke-width="1.400"/><rect x="3" y="13" width="16" height="6" rx="1.800" fill="none" stroke="#ced0d6" stroke-width="1.400"/><path d="M6 7h3M6 16h3" fill="none" stroke="#ced0d6" stroke-width="1.400"/></svg><div class="a" style="left:6px;top:858px;width:1719px;height:30px;background:#3c3f41"></div><div class="a" style="left:6px;top:858px;width:1719px;height:1px;background:#323436"></div><div class="a" style="left:6px;top:888px;width:1719px;height:1px;background:#7e7e7e"></div><div class="a" style="left:20px;top:869px;width:9px;height:9px;border:1.300px solid #4a84f0;border-radius:2.500px;background:#25324f"></div><div class="mos" style="left:32px;top:880px;width:28px;height:6px;background:#2f3133"></div><div class="t" style="left:59px;top:863px;font-size:13.300px">-front</div><svg class="i" style="left:94px;top:865px" width="14" height="14" viewBox="0 0 16 16"><path d="M6 3.5l4.5 4.5L6 12.5" fill="none" stroke="#ced0d6" stroke-width="1.2"/></svg><svg class="i" style="left:115px;top:864px" width="15" height="15" viewBox="0 0 16 16"><g transform="scale(1.0667)"><rect x="6.100" y="0.100" width="3.300" height="2.900" rx="0.400" fill="#548af7"/><rect x="2.100" y="4.100" width="3.200" height="3" rx="0.400" fill="#548af7"/><rect x="6.100" y="4.100" width="3.300" height="3" rx="0.400" fill="#548af7"/><path d="M0.100 9.200Q0.100 8.200 1 8.200H10.200C11.100 7.700 11.500 6.500 11.800 5 12.400 6.400 13.300 7.200 14.700 7.500 13.900 8.300 13.100 8.800 12.500 9 12 12.200 9.600 14.500 6.200 14.500 2.700 14.500 0.300 12.200 0.100 9.200z" fill="#548af7"/><rect x="3.200" y="10" width="2.100" height="2" rx="0.300" fill="#3c3f41"/></g></svg><div class="t" style="left:135px;top:863px;font-size:13.300px">docker-compose.yml</div><div class="a" style="left:6px;top:889px;width:1719px;height:50px;background:linear-gradient(180deg,#131313 0,#1c1c1c 100%)"></div><div class="a" style="left:6px;top:889px;width:22px;height:321px;background:linear-gradient(90deg,#161616 0,#1c1c1c 100%)"></div><div class="a" style="left:514px;top:470px;width:1093px;height:735px;background:#3c3f41;border-radius:9px;box-shadow:0 0 0 1px #4b4e50, 0 6px 28px 6px rgba(0,0,0,.45)"></div><div class="a" style="left:526px;top:480px;width:16px;height:16px;background:#000;border:1.500px solid #21d0f5"></div><div class="a" style="left:528.500px;top:481px;font-size:6.500px;font-weight:700;color:#fff;line-height:8px;letter-spacing:-0.2px">WS</div><div class="a" style="left:529px;top:491px;width:5px;height:1.300px;background:#fff"></div><div class="t" style="left:554px;top:479px;color:#c5c7ca"><span class="c">运行</span>/<span class="c">调试配置</span></div><svg class="i" style="left:1585px;top:483px" width="12" height="12" viewBox="0 0 12 12"><path d="M1 1l10 10M11 1L1 11" stroke="#b0b2b5" stroke-width="1.100"/></svg><div class="a" style="left:514px;top:509px;width:1093px;height:1px;background:#4f5254"></div><div class="a" style="left:839px;top:510px;width:1px;height:649px;background:#323436"></div><div class="a" style="left:514px;top:534px;width:324px;height:1px;background:#323436"></div><svg class="i" style="left:519px;top:513px" width="16" height="16" viewBox="0 0 16 16"><path d="M8 1.500v13M1.500 8h13" fill="none" stroke="#ced0d6" stroke-width="1.200"/></svg><svg class="i" style="left:544px;top:513px" width="16" height="16" viewBox="0 0 16 16"><path d="M1.500 8h13" fill="none" stroke="#ced0d6" stroke-width="1.200"/></svg><svg class="i" style="left:571px;top:513px" width="16" height="16" viewBox="0 0 16 16"><rect x="2.500" y="4.500" width="9" height="10" rx="1.500" fill="none" stroke="#ced0d6" stroke-width="1.200"/><path d="M5 2.500h7.500a1.500 1.500 0 0 1 1.500 1.500v8" fill="none" stroke="#ced0d6" stroke-width="1.200"/><path d="M4.800 7.500h4.500M4.800 9.700h4.500M4.800 11.900h4.500" fill="none" stroke="#ced0d6" stroke-width="1.200" stroke-width="1"/></svg><svg class="i" style="left:597px;top:513px" width="18" height="17" viewBox="0 0 18 17"><path d="M8 13.500H2.700a1.200 1.200 0 0 1-1.200-1.200V3.700a1.200 1.200 0 0 1 1.200-1.200h3.600l1.700 2h6.300a1.200 1.200 0 0 1 1.200 1.200v3" fill="none" stroke="#ced0d6" stroke-width="1.200"/><path d="M13.500 10v6M10.500 13h6" fill="none" stroke="#4a8df8" stroke-width="1.300"/></svg><svg class="i" style="left:623px;top:513px" width="17" height="16" viewBox="0 0 17 16"><path d="M4.500 2v12M1.500 11l3 3 3-3" fill="none" stroke="#5f6266" stroke-width="1.200"/><text x="10" y="7" font-family="Liberation Sans, sans-serif" font-size="7" fill="#6a6d70">a</text><text x="10" y="14.500" font-family="Liberation Sans, sans-serif" font-size="7" fill="#6a6d70">z</text></svg><svg class="i" style="left:518px;top:537px" width="16" height="16" viewBox="0 0 16 16"><path d="M3.5 6L8 10.5 12.5 6" fill="none" stroke="#ced0d6" stroke-width="1.2"/></svg><svg class="i" style="left:538px;top:537px" width="15" height="15" viewBox="0 0 16 16"><g transform="translate(0 1) scale(0.8889)"><rect x="3.800" y="0.100" width="6.500" height="7" rx="1.100" fill="#548af7"/><path d="M0.300 9.200Q0.300 8 1.300 8H12.200C13.500 7.500 14 6 14.400 4.200 15.200 6 16.400 7 18 7.400 17 8.500 16 9 15.300 9.300 14.800 13 12 16 7.800 16 3.500 16 0.500 13 0.300 9.200z" fill="#548af7"/><circle cx="5.200" cy="11.700" r="1.050" fill="#3c3f41"/></g></svg><div class="t b" style="left:557px;top:536px;color:#d0d2d5;font-size:13px">Docker</div><svg class="i" style="left:556px;top:558px" width="14" height="14" viewBox="0 0 16 16"><g transform="translate(0 1) scale(0.8889)"><rect x="3.800" y="0.100" width="6.500" height="7" rx="1.100" fill="#548af7"/><path d="M0.300 9.200Q0.300 8 1.300 8H12.200C13.500 7.500 14 6 14.400 4.200 15.200 6 16.400 7 18 7.400 17 8.500 16 9 15.300 9.300 14.800 13 12 16 7.800 16 3.500 16 0.500 13 0.300 9.200z" fill="#548af7"/><circle cx="5.200" cy="11.700" r="1.050" fill="#3c3f41"/></g></svg><div class="t" style="left:573px;top:556px;font-size:12.800px">10.2.7.113np</div><div class="a" style="left:526px;top:575px;width:301px;height:20px;border-radius:3px;background:#0d293e"></div><svg class="i" style="left:556px;top:578px" width="14" height="14" viewBox="0 0 16 16"><g transform="translate(0 1) scale(0.8889)"><rect x="3.800" y="0.100" width="6.500" height="7" rx="1.100" fill="#548af7"/><path d="M0.300 9.200Q0.300 8 1.300 8H12.200C13.500 7.500 14 6 14.400 4.200 15.200 6 16.400 7 18 7.400 17 8.500 16 9 15.300 9.300 14.800 13 12 16 7.800 16 3.500 16 0.500 13 0.300 9.200z" fill="#548af7"/><circle cx="5.200" cy="11.700" r="1.050" fill="#3c3f41"/></g></svg><div class="t" style="left:573px;top:576px;font-size:12.800px;color:#d0d2d5">10.2.7.113p</div><svg class="i" style="left:556px;top:598px" width="14" height="14" viewBox="0 0 16 16"><g transform="translate(0 1) scale(0.8889)"><rect x="3.800" y="0.100" width="6.500" height="7" rx="1.100" fill="#4d6493"/><path d="M0.300 9.200Q0.300 8 1.300 8H12.200C13.500 7.500 14 6 14.400 4.200 15.200 6 16.400 7 18 7.400 17 8.500 16 9 15.300 9.300 14.800 13 12 16 7.800 16 3.500 16 0.500 13 0.300 9.200z" fill="#4d6493"/><circle cx="5.200" cy="11.700" r="1.050" fill="#3c3f41"/></g></svg><div class="t" style="left:573px;top:596px;color:#7d8083"><span class="c">本地</span>docker</div><svg class="i" style="left:518px;top:617px" width="16" height="16" viewBox="0 0 16 16"><path d="M3.5 6L8 10.5 12.5 6" fill="none" stroke="#ced0d6" stroke-width="1.2"/></svg><svg class="i" style="left:538px;top:617px" width="15" height="15" viewBox="0 0 16 16"><rect x="1.250" y="1.250" width="13.500" height="13.500" rx="0.800" fill="#ffffff" stroke="#cb2b35" stroke-width="2"/><rect x="8" y="5.300" width="2.500" height="9" fill="#cb2b35"/></svg><div class="t b" style="left:557px;top:616px;color:#d0d2d5;font-size:13px">npm</div><svg class="i" style="left:557px;top:638px" width="14" height="14" viewBox="0 0 16 16"><rect x="1.250" y="1.250" width="13.500" height="13.500" rx="0.800" fill="#b4b4b4" stroke="#8f3a42" stroke-width="2"/><rect x="8" y="5.300" width="2.500" height="9" fill="#8f3a42"/></svg><div class="t" style="left:573px;top:636px">build</div><svg class="i" style="left:557px;top:658px" width="14" height="14" viewBox="0 0 16 16"><rect x="1.250" y="1.250" width="13.500" height="13.500" rx="0.800" fill="#b4b4b4" stroke="#8f3a42" stroke-width="2"/><rect x="8" y="5.300" width="2.500" height="9" fill="#8f3a42"/></svg><div class="t" style="left:573px;top:656px;color:#7d8083">dev</div><div class="t bl" style="left:525px;top:1130px"><span class="c">编辑配置模板</span>...</div><div class="a" style="left:514px;top:1158px;width:1093px;height:1px;background:#323436"></div><div class="a" style="left:529px;top:1171px;width:23px;height:23px;border-radius:12px;background:#4c5052;border:1px solid #5e6060"></div><div class="t" style="left:535px;top:1172px;font-size:17px;color:#c5c7ca">?</div><div class="btn" style="left:1234px;top:1170px;width:100px;height:24px"></div><div class="a" style="left:1311px;top:1174px;width:1px;height:16px;background:#5e6060"></div><svg class="i" style="left:1249px;top:1174px" width="15" height="16" viewBox="0 0 15 16"><path d="M2 2l11 6-11 6z" fill="#253627" stroke="#57965c" stroke-width="1.300" stroke-linejoin="round"/></svg><div class="t" style="left:1270px;top:1173px"><span class="c">运行</span></div><svg class="i" style="left:1315px;top:1175px" width="14" height="14" viewBox="0 0 16 16"><path d="M3.5 6L8 10.5 12.5 6" fill="none" stroke="#ced0d6" stroke-width="1.2"/></svg><div class="btn" style="left:1352px;top:1170px;width:72px;height:24px;line-height:24px;background:#365880;border-color:#4a77a4;color:#e0e2e5"><span class="c">确定</span></div><div class="btn" style="left:1436px;top:1170px;width:72px;height:24px;line-height:24px"><span class="c">取消</span></div><div class="btn" style="left:1520px;top:1170px;width:72px;height:24px;line-height:24px;background:#3c3f41;color:#777a7d"><span class="c">应用</span>(A)</div><div class="t" style="left:857px;top:531px"><span class="c">名称</span>(<u>N</u>):</div><div class="inp" style="left:915px;top:529px;width:368px;height:24px"></div><div class="t" style="left:921px;top:531px;font-size:12.800px">10.2.7.113p</div><div class="cb" style="left:1319px;top:534px"></div><div class="t" style="left:1339px;top:532px"><span class="c">允许多个实例</span>(<u>U</u>)</div><div class="cb" style="left:1451px;top:534px"></div><div class="t" style="left:1471px;top:532px"><span class="c">存储为项目文件</span>(<u>S</u>)</div><svg class="i" style="left:1574px;top:533px" width="16" height="16" viewBox="0 0 16 16"><circle cx="7.500" cy="8" r="1.800" fill="none" stroke="#5f6266" stroke-width="1"/><path d="M7.500 2l1.200 1.500 1.900-.4.600 1.900 1.800.8-.7 1.800.7 1.800-1.800.8-.6 1.900-1.900-.4L7.500 14l-1.200-1.500-1.900.4-.6-1.900L2 10.200l.7-1.800L2 6.600l1.800-.8.600-1.900 1.900.4z" fill="none" stroke="#5f6266" stroke-width="1" stroke-linejoin="round"/><path d="M15 12v3h-3z" fill="#5f6266"/></svg><div class="t" style="left:855px;top:571px"><span class="c">服务器</span>:</div><div class="inp" style="left:907px;top:568px;width:652px;height:25px;background:#3c3f41;border-radius:3px"></div><svg class="i" style="left:913px;top:572px" width="16" height="16" viewBox="0 0 16 16"><g transform="translate(0 1) scale(0.8889)"><rect x="3.800" y="0.100" width="6.500" height="7" rx="1.100" fill="#548af7"/><path d="M0.300 9.200Q0.300 8 1.300 8H12.200C13.500 7.500 14 6 14.400 4.200 15.200 6 16.400 7 18 7.400 17 8.500 16 9 15.300 9.300 14.800 13 12 16 7.800 16 3.500 16 0.500 13 0.300 9.200z" fill="#548af7"/><circle cx="5.200" cy="11.700" r="1.050" fill="#3c3f41"/></g></svg><div class="t" style="left:932px;top:571px;font-size:12.800px">10.2.7.113</div><svg class="i" style="left:1539px;top:573px" width="14" height="14" viewBox="0 0 16 16"><path d="M3.5 6L8 10.5 12.5 6" fill="none" stroke="#ced0d6" stroke-width="1.2"/></svg><div class="btn" style="left:1565px;top:568px;width:25px;height:25px;line-height:21px;color:#d0d2d5">...</div><div class="a" style="left:860px;top:607px;width:731px;height:1px;background:#505355"></div><div class="t" style="left:860px;top:619px;color:#d0d2d5;font-weight:500"><span class="c">运行</span></div><div class="t bl" style="left:1460px;top:619px"><span class="c">修改选项</span>(<u>M</u>)</div><svg class="i" style="left:1530px;top:621px" width="14" height="14" viewBox="0 0 16 16"><path d="M3.5 6L8 10.5 12.5 6" fill="none" stroke="#ced0d6" stroke-width="1.2"/></svg><div class="t" style="left:1551px;top:619px;color:#777a7d;font-size:13px">Alt+M</div><div class="t" style="left:860px;top:654px;font-size:13.400px">Compose <span class="c">文件</span>:</div><div class="inp" style="left:960px;top:651px;width:629px;height:24px;background:#3c3f41"></div><div class="t" style="left:966px;top:653px;font-size:13.400px">./docker-compose.yml;</div><svg class="i" style="left:1566px;top:655px" width="16" height="16" viewBox="0 0 16 16"><path d="M1.5 4.2a1.2 1.2 0 0 1 1.2-1.2h3.1l1.7 1.8h5.8a1.2 1.2 0 0 1 1.2 1.2v5.8a1.2 1.2 0 0 1-1.2 1.2H2.7a1.2 1.2 0 0 1-1.2-1.2z" fill="none" stroke="#ced0d6" stroke-width="1.1"/></svg><div class="chip" style="left:863px;top:695px;width:152px"></div><div class="t" style="left:874px;top:698px">`down` <span class="c">时移除孤立项</span></div><svg class="i" style="left:996px;top:703px" width="9" height="9" viewBox="0 0 9 9"><path d="M1 1l7 7M8 1L1 8" stroke="#85888b" stroke-width="1"/></svg><div class="t" style="left:860px;top:759px;font-size:13.500px">docker compose up</div><div class="a" style="left:985px;top:769px;width:556px;height:1px;background:#505355"></div><div class="t bl" style="left:1550px;top:758px"><span class="c">修改</span></div><svg class="i" style="left:1576px;top:761px" width="14" height="14" viewBox="0 0 16 16"><path d="M3.5 6L8 10.5 12.5 6" fill="none" stroke="#ced0d6" stroke-width="1.2"/></svg><div class="t" style="left:880px;top:799px"><span class="c">服务</span>:</div><div class="inp" style="left:920px;top:796px;width:669px;height:24px"></div><div class="t" style="left:926px;top:800px;color:#777a7d"><span class="c">留空将运行所有服务</span></div><div class="chip" style="left:883px;top:840px;width:107px"></div><div class="t" style="left:895px;top:843px"><span class="c">附加到</span>: <span class="bl"><span class="c">无</span></span></div><svg class="i" style="left:952px;top:846px" width="14" height="14" viewBox="0 0 16 16"><path d="M3.5 6L8 10.5 12.5 6" fill="none" stroke="#ced0d6" stroke-width="1.2"/></svg><svg class="i" style="left:972px;top:848px" width="9" height="9" viewBox="0 0 9 9"><path d="M1 1l7 7M8 1L1 8" stroke="#85888b" stroke-width="1"/></svg><div class="chip" style="left:998px;top:840px;width:119px"></div><div class="t" style="left:1016px;top:843px"><span class="c">构建</span>:  <span class="bl"><span class="c">始终</span></span></div><svg class="i" style="left:1079px;top:846px" width="14" height="14" viewBox="0 0 16 16"><path d="M3.5 6L8 10.5 12.5 6" fill="none" stroke="#ced0d6" stroke-width="1.2"/></svg><svg class="i" style="left:1099px;top:848px" width="9" height="9" viewBox="0 0 9 9"><path d="M1 1l7 7M8 1L1 8" stroke="#85888b" stroke-width="1"/></svg><svg class="i" style="left:853px;top:910px" width="14" height="14" viewBox="0 0 16 16"><path d="M3.5 6L8 10.5 12.5 6" fill="none" stroke="#ced0d6" stroke-width="1.2"/></svg><div class="t" style="left:870px;top:908px"><span class="c">执行前</span>(<u>B</u>)</div><div class="a" style="left:929px;top:918px;width:662px;height:1px;background:#505355"></div><div class="a" style="left:875px;top:932px;width:716px;height:107px;border:1px solid #323436;background:#3c3f41"></div><div class="a" style="left:876px;top:957px;width:714px;height:1px;background:#323436"></div><div class="a" style="left:876px;top:958px;width:714px;height:20px;background:#45494a"></div><svg class="i" style="left:881px;top:937px" width="15" height="15" viewBox="0 0 15 15"><path d="M7.500 1.500v12M1.500 7.500h12" fill="none" stroke="#dfe1e5" stroke-width="1.300"/></svg><svg class="i" style="left:907px;top:937px" width="15" height="15" viewBox="0 0 15 15"><path d="M1.500 7.500h12" fill="none" stroke="#5f6266" stroke-width="1.100"/></svg><svg class="i" style="left:933px;top:937px" width="15" height="15" viewBox="0 0 15 15"><path d="M2.500 12.500l.8-3 6.700-6.700 2.200 2.200-6.700 6.700z" fill="none" stroke="#5f6266" stroke-width="1.100" stroke-linejoin="round"/></svg><svg class="i" style="left:959px;top:937px" width="15" height="15" viewBox="0 0 15 15"><path d="M7.500 13V3M3.500 6.500l4-4 4 4M2 13.500h11" fill="none" stroke="#5f6266" stroke-width="1.100"/></svg><svg class="i" style="left:985px;top:937px" width="15" height="15" viewBox="0 0 15 15"><path d="M7.500 4v9.500M3.500 9.500l4 4 4-4M2 2h11" fill="none" stroke="#5f6266" stroke-width="1.100"/></svg><svg class="i" style="left:878px;top:961px" width="14" height="14" viewBox="0 0 16 16"><rect x="1.250" y="1.250" width="13.500" height="13.500" rx="0.800" fill="#ffffff" stroke="#cb2b35" stroke-width="2"/><rect x="8" y="5.300" width="2.500" height="9" fill="#cb2b35"/></svg><div class="t" style="left:897px;top:959px"><span class="c">运行</span> 'npm 'build''</div><div class="cb" style="left:888px;top:1048px"></div><div class="t" style="left:908px;top:1046px"><span class="c">显示此页面</span></div><div class="cb" style="left:981px;top:1048px"></div><svg class="i" style="left:982px;top:1049px" width="12" height="12" viewBox="0 0 12 12"><path d="M2.500 6l2.500 3 4.500-6.500" fill="none" stroke="#c0c2c5" stroke-width="1.400"/></svg><div class="t" style="left:1001px;top:1046px"><span class="c">激活工具窗口</span></div><div class="cb" style="left:1086px;top:1048px"></div><div class="t" style="left:1106px;top:1046px"><span class="c">使工具窗口获得焦点</span></div><div class="a" style="left:1448px;top:786px;width:275px;height:267px;background:#3c3f41;border-radius:9px;border:1px solid #56595c;box-shadow:0 4px 18px 2px rgba(0,0,0,.45);overflow:hidden"><div style="height:38px;background:#4b4f52"></div></div><div class="t b" style="left:1448px;top:797px;width:275px;text-align:center;color:#d0d2d5;font-size:13.100px"><span class="c">添加</span>docker compose up<span class="c">选项</span></div><div class="t" style="left:1483px;top:826px;color:#c5c7ca"><span style="font-size:12.200px">SIGKILL</span> <span class="c">超时</span><span style="color:#7d8083">  --timeout</span></div><div class="t" style="left:1483px;top:846px;color:#c5c7ca"><span class="c">返回退出代码</span><span style="color:#7d8083">  --exit-code-from</span></div><div class="t" style="left:1483px;top:866px;color:#c5c7ca"><span class="c">重写扩展</span><span style="color:#7d8083">  --scale</span></div><div class="t" style="left:1483px;top:886px;color:#c5c7ca"><span class="c">重新创建依赖项</span><span style="color:#7d8083">  --always-recreate-deps</span></div><div class="t" style="left:1483px;top:906px;color:#c5c7ca"><span class="c">重新创建匿名卷</span><span style="color:#7d8083">  --renew-anon-volumes</span></div><div class="t" style="left:1483px;top:926px;color:#c5c7ca"><span class="c">移除孤立项</span><span style="color:#7d8083">  --remove-orphans</span></div><div class="t" style="left:1483px;top:946px;color:#c5c7ca"><span class="c">启动</span><span style="color:#7d8083">  <span class="c">所选部署和依赖项</span></span></div><svg class="i" style="left:1702px;top:949px" width="12" height="12" viewBox="0 0 12 12"><path d="M4 1.500L8.500 6 4 10.500" fill="none" stroke="#ced0d6" stroke-width="1.200"/></svg><div class="t" style="left:1483px;top:966px;color:#c5c7ca"><span class="c">附加到</span><span style="color:#7d8083">  <span class="c">无</span></span></div><svg class="i" style="left:1702px;top:969px" width="12" height="12" viewBox="0 0 12 12"><path d="M4 1.500L8.500 6 4 10.500" fill="none" stroke="#ced0d6" stroke-width="1.200"/></svg><div class="t" style="left:1483px;top:986px;color:#c5c7ca"><span class="c">重新创建容器</span><span style="color:#7d8083">  <span class="c">更改的配置</span></span></div><svg class="i" style="left:1702px;top:989px" width="12" height="12" viewBox="0 0 12 12"><path d="M4 1.500L8.500 6 4 10.500" fill="none" stroke="#ced0d6" stroke-width="1.200"/></svg><div class="a" style="left:1455px;top:1005px;width:261px;height:20px;border-radius:4px;background:#4b6eaf"></div><div class="t" style="left:1483px;top:1006px;color:#dfe1e5"><span class="c">构建</span><span style="color:#7088b8">  <span class="c">始终</span></span></div><svg class="i" style="left:1702px;top:1009px" width="12" height="12" viewBox="0 0 12 12"><path d="M4 1.500L8.500 6 4 10.500" fill="none" stroke="#ced0d6" stroke-width="1.200"/></svg><div class="t" style="left:1483px;top:1026px;color:#c5c7ca"><span class="c">停止容器</span><span style="color:#7d8083">  <span class="c">手动</span></span></div><svg class="i" style="left:1702px;top:1029px" width="12" height="12" viewBox="0 0 12 12"><path d="M4 1.500L8.500 6 4 10.500" fill="none" stroke="#ced0d6" stroke-width="1.200"/></svg><div class="a" style="left:1303px;top:1005px;width:140px;height:76px;background:#3c3f41;border-radius:9px;border:1px solid #56595c;box-shadow:0 4px 18px 2px rgba(0,0,0,.45)"></div><div class="t" style="left:1338px;top:1014px;color:#c5c7ca"><span class="c">仅缺失镜像</span></div><div class="t" style="left:1338px;top:1034px;color:#c5c7ca"><span class="c">从不</span><span class="g">  --no-build</span></div><div class="a" style="left:1310px;top:1053px;width:125px;height:20px;border-radius:4px;background:#4b6eaf"></div><svg class="i" style="left:1319px;top:1057px" width="13" height="12" viewBox="0 0 13 12"><path d="M2 6.500l3 3.500 6-8.500" fill="none" stroke="#ffffff" stroke-width="1.500"/></svg><div class="t" style="left:1338px;top:1053px;color:#e6e8ea"><span class="c">始终</span><span style="color:#7f93b8">  --build</span></div><svg class="i" style="left:0;top:0" width="1725" height="1210" viewBox="0 0 1725 1210"><polygon points="398.0,129.5 452.3,163.6 451.8,156.6 460.8,173.5 441.8,171.1 448.6,169.1 397.4,130.3" fill="#e8402a"/><polygon points="601.5,174.8 1057.3,33.2 1051.5,29.2 1070.3,32.7 1056.6,46.1 1059.2,39.5 601.7,175.8" fill="#e8402a"/><polygon points="1141.5,43.1 1044.9,517.4 1051.2,514.2 1039.1,529.0 1034.0,510.6 1038.5,516.0 1140.5,42.9" fill="#e8402a"/><polygon points="1463.1,745.3 1531.7,760.2 1528.8,753.7 1543.1,766.5 1524.4,770.8 1530.1,766.5 1462.9,746.3" fill="#e8402a"/><polygon points="1571.8,778.4 1515.6,996.1 1522.0,993.3 1509.1,1007.4 1505.1,988.7 1509.2,994.4 1570.8,778.2" fill="#e8402a"/><polygon points="1474.1,1019.2 1393.7,1055.3 1399.9,1058.7 1380.8,1057.0 1393.2,1042.4 1391.2,1049.2 1473.7,1018.2" fill="#e8402a"/><polygon points="1365.9,1052.4 1091.7,876.3 1092.4,883.3 1083.0,866.6 1102.0,868.5 1095.3,870.7 1366.5,1051.6" fill="#e8402a"/><polygon points="686.4,758.7 875.7,941.0 876.4,934.0 882.4,952.2 864.1,946.6 871.1,945.7 685.6,759.5" fill="#e8402a"/></svg><div class="red" style="left:308px;top:102px;font-size:21.05px">①运行一下立即关闭，会生成一个运行配置</div><div class="red" style="left:1126px;top:483.5px;font-size:21.05px">②修改运行配置名称</div><div class="red" style="left:1301px;top:700px;font-size:21.05px">③配置每次运行都重新构建镜像</div><div class="red" style="left:597px;top:724px;font-size:21.05px">④根据需求加上运行前打包的配置</div>
</body></html>
